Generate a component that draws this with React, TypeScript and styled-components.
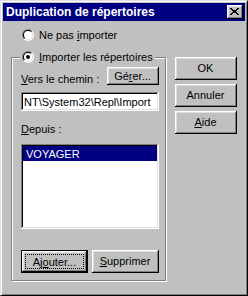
import React from "react";
import styled, { createGlobalStyle } from "styled-components";

const GlobalStyle = createGlobalStyle`
  html, body {
    margin: 0;
    padding: 0;
    background: #c0c0c0;
  }
  body {
    font-family: "Liberation Sans", Arial, sans-serif;
    font-size: 11px;
    color: #000;
  }
`;

const Window = styled.div`
  width: 248px;
  height: 296px;
  box-sizing: border-box;
  background: #c0c0c0;
  border: 1px solid;
  border-color: #dfdfdf #000 #000 #dfdfdf;
  box-shadow: inset 1px 1px #fff, inset -1px -1px #808080;
  padding: 2px;
  display: flex;
  flex-direction: column;
`;

const TitleBar = styled.div`
  height: 18px;
  flex: none;
  background: #000080;
  color: #fff;
  font-weight: bold;
  font-size: 12px;
  display: flex;
  align-items: center;
  justify-content: space-between;
  padding: 0 2px 0 3px;
`;

const CloseButton = styled.div`
  width: 16px;
  height: 14px;
  box-sizing: border-box;
  background: #c0c0c0;
  box-shadow: inset -1px -1px #000, inset 1px 1px #fff, inset -2px -2px #808080,
    inset 2px 2px #dfdfdf;
  display: flex;
  align-items: center;
  justify-content: center;
  padding: 0 1px 1px 0;
`;

const Body = styled.div`
  flex: 1;
  display: flex;
  gap: 8px;
  padding: 7px 8px 0 8px;
`;

const LeftColumn = styled.div`
  width: 156px;
  display: flex;
  flex-direction: column;
`;

const RightColumn = styled.div`
  width: 62px;
  margin-top: 29px;
  display: flex;
  flex-direction: column;
  gap: 4px;
`;

const RadioRow = styled.div`
  display: flex;
  align-items: center;
  gap: 5px;
  height: 14px;
  margin-left: 11px;
`;

const RadioOuter = styled.span`
  width: 12px;
  height: 12px;
  box-sizing: border-box;
  border-radius: 50%;
  padding: 1px;
  background: linear-gradient(135deg, #808080 50%, #fff 50%);
  display: flex;
  flex: none;
`;

const RadioInner = styled.span`
  flex: 1;
  border-radius: 50%;
  padding: 1px;
  background: linear-gradient(135deg, #000 50%, #dfdfdf 50%);
  display: flex;
`;

const RadioFace = styled.span`
  flex: 1;
  border-radius: 50%;
  background: #fff;
  display: flex;
  align-items: center;
  justify-content: center;
`;

const RadioDot = styled.span<{ $on: boolean }>`
  width: 4px;
  height: 4px;
  border-radius: 50%;
  background: ${(p) => (p.$on ? "#000" : "transparent")};
`;

const Group = styled.fieldset`
  margin: 8px 0 0 0;
  padding: 0 6px 7px 9px;
  width: 155px;
  box-sizing: border-box;
  min-width: 0;
  border: 1px solid #808080;
  box-shadow: 1px 1px 0 #fff, inset 1px 1px 0 #fff;
  display: flex;
  flex-direction: column;
`;

const Legend = styled.legend`
  margin-left: -1px;
  padding: 0 2px;
  height: 14px;
  background: #c0c0c0;
  display: flex;
  align-items: center;
  gap: 5px;
`;

const PathRow = styled.div`
  height: 18px;
  margin-top: 3px;
  display: flex;
  justify-content: space-between;
  align-items: flex-start;
`;

const Label = styled.div<{ $top: number }>`
  line-height: 13px;
  margin-top: ${(p) => p.$top}px;
`;

const Field = styled.div`
  margin-top: 7px;
  height: 19px;
  box-sizing: border-box;
  background: #fff;
  box-shadow: inset -1px -1px #fff, inset 1px 1px #808080, inset -2px -2px #dfdfdf,
    inset 2px 2px #000;
  padding: 0 3px;
  display: flex;
  align-items: center;
  white-space: nowrap;
  overflow: hidden;
`;

const ListBox = styled.div`
  margin-top: 8px;
  height: 85px;
  box-sizing: border-box;
  background: #fff;
  box-shadow: inset -1px -1px #fff, inset 1px 1px #808080, inset -2px -2px #dfdfdf,
    inset 2px 2px #000;
  padding: 2px;
`;

const ListItem = styled.div<{ $selected: boolean }>`
  height: 15px;
  padding-left: 3px;
  display: flex;
  align-items: center;
  background: ${(p) => (p.$selected ? "#000080" : "transparent")};
  color: ${(p) => (p.$selected ? "#fff" : "#000")};
`;

const ButtonRow = styled.div`
  margin-top: 21px;
  display: flex;
  justify-content: space-between;
`;

const Button = styled.div<{ $w: number; $h?: number; $default?: boolean }>`
  width: ${(p) => p.$w}px;
  height: ${(p) => p.$h ?? 23}px;
  box-sizing: border-box;
  background: #c0c0c0;
  display: flex;
  align-items: center;
  justify-content: center;
  border: ${(p) => (p.$default ? "1px solid #000" : "none")};
  box-shadow: inset -1px -1px #000, inset 1px 1px #fff, inset -2px -2px #808080,
    inset 2px 2px #dfdfdf;
  padding: 0 1px 1px 0;
`;

const FocusRing = styled.span`
  align-self: stretch;
  flex: 1;
  margin: 3px 2px 2px 3px;
  border: 1px dotted #000;
  display: flex;
  align-items: center;
  justify-content: center;
`;

function Radio({ on }: { on: boolean }) {
  return (
    <RadioOuter>
      <RadioInner>
        <RadioFace>
          <RadioDot $on={on} />
        </RadioFace>
      </RadioInner>
    </RadioOuter>
  );
}

export default function App() {
  return (
    <>
      <GlobalStyle />
      <Window>
        <TitleBar>
          <span>Duplication de répertoires</span>
          <CloseButton>
            <svg width="9" height="7" viewBox="0 0 9 7" shapeRendering="crispEdges">
              <path
                fill="#000"
                d="M0 0h2v1H0zM7 0h2v1H7zM1 1h2v1H1zM6 1h2v1H6zM2 2h5v1H2zM3 3h3v1H3zM2 4h5v1H2zM1 5h2v1H1zM6 5h2v1H6zM0 6h2v1H0zM7 6h2v1H7z"
              />
            </svg>
          </CloseButton>
        </TitleBar>
        <Body>
          <LeftColumn>
            <RadioRow>
              <Radio on={false} />
              <span>
                Ne pas <u>i</u>mporter
              </span>
            </RadioRow>
            <Group>
              <Legend>
                <Radio on={true} />
                <span>
                  <u>I</u>mporter les répertoires
                </span>
              </Legend>
              <PathRow>
                <Label $top={6}>
                  <u>V</u>ers le chemin :
                </Label>
                <Button $w={52} $h={18}>
                  Gé<u>r</u>er...
                </Button>
              </PathRow>
              <Field>{"NT\\System32\\Repl\\Import"}</Field>
              <Label $top={12}>
                <u>D</u>epuis :
              </Label>
              <ListBox>
                <ListItem $selected={true}>VOYAGER</ListItem>
              </ListBox>
              <ButtonRow>
                <Button $w={67} $default>
                  <FocusRing>
                    Aj<u>o</u>uter...
                  </FocusRing>
                </Button>
                <Button $w={67}>
                  <span>
                    <u>S</u>upprimer
                  </span>
                </Button>
              </ButtonRow>
            </Group>
          </LeftColumn>
          <RightColumn>
            <Button $w={62}>OK</Button>
            <Button $w={62}>Annuler</Button>
            <Button $w={62}>
              <span>
                <u>A</u>ide
              </span>
            </Button>
          </RightColumn>
        </Body>
      </Window>
    </>
  );
}
